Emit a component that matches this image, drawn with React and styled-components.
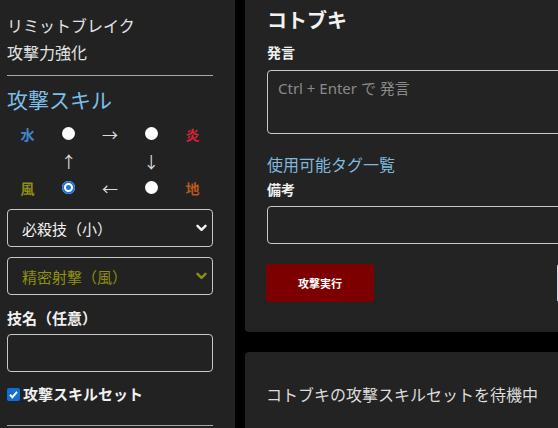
import React from "react";
import styled, { createGlobalStyle } from "styled-components";

const FONT = `"Noto Sans", "Noto Sans CJK JP", sans-serif`;

const GlobalStyle = createGlobalStyle`
  html, body {
    margin: 0;
    background: #000;
    overflow: hidden;
    font-family: ${FONT};
    color: #dedede;
  }
`;

const elements = [
  [
    { type: "label", text: "水", color: "#3f86c9" },
    { type: "radio" },
    { type: "arrow", text: "→" },
    { type: "radio" },
    { type: "label", text: "炎", color: "#d8243a" },
  ],
  [
    { type: "empty" },
    { type: "arrow", text: "↑" },
    { type: "empty" },
    { type: "arrow", text: "↓" },
    { type: "empty" },
  ],
  [
    { type: "label", text: "風", color: "#8f8f12" },
    { type: "radio", checked: true },
    { type: "arrow", text: "←" },
    { type: "radio" },
    { type: "label", text: "地", color: "#b8581f" },
  ],
];

const Chevron = ({ color }) => (
  <svg width="11" height="8" viewBox="0 0 11 8">
    <polyline
      points="1.5,1.8 5.5,5.8 9.5,1.8"
      fill="none"
      stroke={color}
      strokeWidth="2.4"
      strokeLinecap="round"
      strokeLinejoin="round"
    />
  </svg>
);

const App = () => {
  return (
    <>
      <GlobalStyle />
      <Page>
        <Sidebar>
          <Line>リミットブレイク</Line>
          <Line>攻撃力強化</Line>
          <Rule />
          <SkillTitle>攻撃スキル</SkillTitle>
          <ElementGrid>
            {elements.flat().map((cell, i) => (
              <Cell key={i}>
                {cell.type === "label" && (
                  <ElementLabel color={cell.color}>{cell.text}</ElementLabel>
                )}
                {cell.type === "radio" && <Radio checked={cell.checked} />}
                {cell.type === "arrow" && <Arrow>{cell.text}</Arrow>}
              </Cell>
            ))}
          </ElementGrid>
          <SelectBox>
            <SelectText>必殺技（小）</SelectText>
            <Chevron color="#f2f2f2" />
          </SelectBox>
          <SelectBox gap="10px">
            <SelectText color="#8f8f12">精密射撃（風）</SelectText>
            <Chevron color="#8f8f12" />
          </SelectBox>
          <FieldLabel>技名（任意）</FieldLabel>
          <TextBox />
          <CheckRow>
            <CheckBox>
              <svg width="13" height="13" viewBox="0 0 13 13">
                <polyline
                  points="3,6.8 5.4,9.2 10,3.8"
                  fill="none"
                  stroke="#fff"
                  strokeWidth="2"
                />
              </svg>
            </CheckBox>
            攻撃スキルセット
          </CheckRow>
          <Rule bottom />
        </Sidebar>

        <Main>
          <Card first>
            <CardTitle>コトブキ</CardTitle>
            <SmallLabel>発言</SmallLabel>
            <TextArea>Ctrl + Enter で 発言</TextArea>
            <TagLink>使用可能タグ一覧</TagLink>
            <SmallLabel tight>備考</SmallLabel>
            <NoteInput />
            <ButtonRow>
              <AttackButton>攻撃実行</AttackButton>
              <GhostButton />
            </ButtonRow>
          </Card>
          <Card>
            <Waiting>コトブキの攻撃スキルセットを待機中</Waiting>
          </Card>
        </Main>
      </Page>
    </>
  );
};

export default App;

const Page = styled.div`
  display: grid;
  grid-template-columns: 235px 420px;
  column-gap: 10px;
  height: 428px;
`;

const Sidebar = styled.div`
  background: #222;
  padding: 13px 22px 0 7px;
  display: flex;
  flex-direction: column;
`;

const Line = styled.div`
  font-size: 16px;
  line-height: 27px;
  color: #e2e2e2;
`;

const Rule = styled.div`
  height: 1px;
  background: #a9a9a9;
  margin-top: ${(p) => (p.bottom ? "20px" : "8px")};
`;

const SkillTitle = styled.div`
  margin-top: 9px;
  font-size: 21px;
  line-height: 30px;
  color: #7dbfe8;
`;

const ElementGrid = styled.div`
  margin-top: 5px;
  display: grid;
  grid-template-columns: repeat(5, 1fr);
  grid-auto-rows: 27px;
`;

const Cell = styled.div`
  display: flex;
  align-items: center;
  justify-content: center;
`;

const ElementLabel = styled.span`
  font-size: 14px;
  font-weight: 700;
  color: ${(p) => p.color};
`;

const Arrow = styled.span`
  font-size: 16px;
  color: #dcdcdc;
`;

const Radio = styled.span`
  width: 13px;
  height: 13px;
  border-radius: 50%;
  background: ${(p) => (p.checked ? "#1a74d8" : "#fff")};
  box-shadow: ${(p) =>
    p.checked ? "inset 0 0 0 2px #1a74d8, inset 0 0 0 4px #fff" : "none"};
`;

const SelectBox = styled.div`
  margin-top: ${(p) => p.gap || "8px"};
  height: 38px;
  box-sizing: border-box;
  border: 1px solid #c8c8c8;
  border-radius: 4px;
  padding: 0 5px 0 14px;
  display: flex;
  align-items: center;
  justify-content: space-between;
`;

const SelectText = styled.span`
  font-size: 15px;
  color: ${(p) => p.color || "#f2f2f2"};
`;

const FieldLabel = styled.div`
  margin-top: 12px;
  font-size: 15px;
  line-height: 22px;
  font-weight: 700;
  color: #f0f0f0;
`;

const TextBox = styled.div`
  margin-top: 5px;
  height: 38px;
  box-sizing: border-box;
  border: 1px solid #c8c8c8;
  border-radius: 4px;
`;

const CheckRow = styled.div`
  margin-top: 11px;
  display: flex;
  align-items: center;
  gap: 3px;
  font-size: 15px;
  line-height: 22px;
  font-weight: 700;
  color: #f0f0f0;
`;

const CheckBox = styled.span`
  width: 13px;
  height: 13px;
  border-radius: 2px;
  background: #0f6fd4;
  display: flex;
`;

const Main = styled.div`
  display: flex;
  flex-direction: column;
  gap: 20px;
`;

const Card = styled.div`
  background: #232323;
  border-radius: ${(p) => (p.first ? "0 0 4px 4px" : "4px")};
  padding: ${(p) => (p.first ? "7px 22px 30px" : "31px 21px 30px")};
`;

const CardTitle = styled.div`
  font-size: 20px;
  line-height: 28px;
  font-weight: 700;
  color: #f2f2f2;
`;

const SmallLabel = styled.div`
  margin-top: ${(p) => (p.tight ? "3px" : "8px")};
  font-size: 14px;
  line-height: 20px;
  font-weight: 700;
  color: #f0f0f0;
`;

const TextArea = styled.div`
  margin-top: 7px;
  height: 64px;
  box-sizing: border-box;
  border: 1px solid #c8c8c8;
  border-radius: 4px;
  padding: 6px 10px;
  font-size: 15px;
  line-height: 22px;
  color: #8a8a8a;
`;

const TagLink = styled.div`
  margin-top: 19px;
  font-size: 16px;
  line-height: 24px;
  color: #7fb7dd;
`;

const NoteInput = styled.div`
  margin-top: 6px;
  height: 38px;
  box-sizing: border-box;
  border: 1px solid #c8c8c8;
  border-radius: 4px;
`;

const ButtonRow = styled.div`
  margin-top: 20px;
  display: flex;
  gap: 183px;
`;

const AttackButton = styled.div`
  flex-shrink: 0;
  width: 108px;
  height: 38px;
  margin-left: -1px;
  background: #7d0000;
  border-radius: 2px;
  display: flex;
  align-items: center;
  justify-content: center;
  font-size: 11px;
  font-weight: 700;
  color: #fff;
`;

const GhostButton = styled.div`
  flex-shrink: 0;
  width: 100px;
  height: 36px;
  border: 1px solid #cfd6e4;
  border-radius: 2px;
`;

const Waiting = styled.div`
  font-size: 16px;
  line-height: 24px;
  color: #dcdcdc;
`;
